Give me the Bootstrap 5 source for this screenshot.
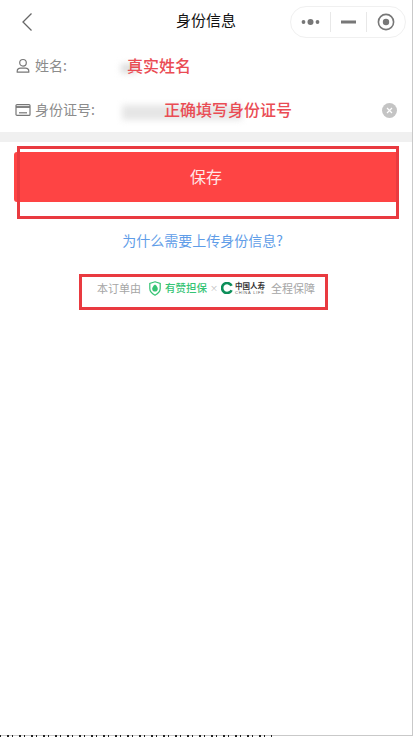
<!DOCTYPE html>
<html lang="zh">
<head>
<meta charset="utf-8">
<title>身份信息</title>
<link href="https://cdn.jsdelivr.net/npm/bootstrap@5.3.0/dist/css/bootstrap.min.css" rel="stylesheet">
<style>
html,body{width:416px;height:737px;margin:0;background:#fff;overflow:hidden}
body{font-family:"Noto Sans CJK SC","Liberation Sans",sans-serif;color:#555;position:relative}
.pg-frame{width:413px;height:736px;border-right:1px solid #c9c9c9;border-bottom:1px solid #c9c9c9;position:relative;background:#fff}
.top-bar{height:44px;position:relative}
.back-ico{width:12px;height:20px;margin-left:21px}
.top-title{position:absolute;left:0;top:9px;width:412px;text-align:center;font-size:15px;line-height:22px;color:#111}
.capsule{position:absolute;left:290px;top:6px;width:116px;height:32px;border:1px solid #f0f0f0;border-radius:16px}
.cap-part{height:20px}
.cap-a{width:39px}.cap-b{width:37px;border-left:1px solid #e8e8e8;border-right:1px solid #e8e8e8}.cap-c{width:38px}
.field-row{height:44px;padding-left:15px;padding-right:15px;font-size:14px;color:#8c8c8c}
.field-ico{width:16px;height:16px;margin-right:4px;flex:none}
.field-lbl{width:92px;flex:none;white-space:nowrap;position:relative;top:-1px}
.hint-red{color:#ea4c54;font-size:16px;font-weight:500;position:relative;top:-1px;white-space:nowrap}
.hint-id{margin-left:37px}
.smear{position:absolute;filter:blur(3px)}
.smear-a{left:121px;top:64px;width:16px;height:9px;background:#dcdcdc}
.smear-b{left:122px;top:105px;width:120px;height:15px;background:#e6e6e6}
.clear-dot{width:15px;height:15px;margin-left:auto;flex:none}
.gap-band{height:10px;background:#f0f0f0}
.save-btn{display:block;width:384px;height:50px;margin:10px 0 0 14px;background:#fe4444;color:#ffe8e8;border:0;border-radius:3px 0 0 3px;font-size:16px;line-height:48px;padding:0 0 2px}
.why-link{margin-top:26px;height:24px;line-height:24px;text-align:center;font-size:14px;color:#5f9de8;width:405px}
.assure-row{margin-top:24px;margin-left:97px;height:24px;font-size:11px;color:#a6a6a6;white-space:nowrap}
.green-txt{color:#35c474;font-weight:500;font-size:10.5px}
.assure-x{font-size:8px;margin:0 3px;color:#bbb}
.life-name{font-size:7.5px;line-height:8px;color:#333;font-weight:700}
.life-en{font-size:4px;line-height:5px;color:#555;font-family:"Liberation Sans",sans-serif;letter-spacing:.8px}
.life-wrap{width:31px;margin-left:2px}
.assure-end{margin-left:5px}
.mark-box{position:absolute;border:3px solid #e93a40;pointer-events:none}
.mark-a{left:17px;top:146px;width:382px;height:73px}
.mark-b{left:79px;top:274px;width:249px;height:36px}
.foot-dash{position:absolute;left:0;top:735px;width:272px;height:2px;background:repeating-linear-gradient(90deg,#222 0 1px,transparent 1px 7px,#222 7px 9px,transparent 9px 12px)}
</style>
</head>
<body>
<div class="pg-frame">
  <div class="top-bar d-flex align-items-center">
    <svg class="back-ico" viewBox="0 0 12 20"><path d="M10.5 1.500 2 10l8.500 8.500" fill="none" stroke="#666" stroke-width="1.300"/></svg>
    <div class="top-title">身份信息</div>
    <div class="capsule d-flex align-items-center">
      <div class="cap-part cap-a d-flex align-items-center justify-content-center">
        <svg width="20" height="8" viewBox="0 0 20 8"><circle cx="2.500" cy="4" r="1.900" fill="#777"/><circle cx="9.500" cy="4" r="3" fill="#777"/><circle cx="16.500" cy="4" r="1.900" fill="#777"/></svg>
      </div>
      <div class="cap-part cap-b d-flex align-items-center justify-content-center">
        <svg width="15" height="4" viewBox="0 0 15 4"><rect y="0.500" width="15" height="3" fill="#777"/></svg>
      </div>
      <div class="cap-part cap-c d-flex align-items-center justify-content-center">
        <svg width="18" height="18" viewBox="0 0 18 18"><circle cx="9" cy="9" r="7.600" fill="none" stroke="#777" stroke-width="1.600"/><circle cx="9" cy="9" r="3.200" fill="#777"/></svg>
      </div>
    </div>
  </div>

  <div class="smear smear-a"></div>
  <div class="smear smear-b"></div>

  <div class="field-row d-flex align-items-center">
    <svg class="field-ico" viewBox="0 0 16 16" fill="none" stroke="#777" stroke-width="1.200"><circle cx="8" cy="4.800" r="3.300"/><path d="M2.200 14.200v-1c0-2 1.800-3.100 3.400-3.100h4.800c1.600 0 3.400 1.100 3.400 3.100v1z" stroke-linejoin="round"/></svg>
    <div class="field-lbl">姓名:</div>
    <div class="hint-red">真实姓名</div>
  </div>
  <div class="field-row d-flex align-items-center">
    <svg class="field-ico" viewBox="0 0 16 16" fill="none" stroke="#777" stroke-width="1.200"><rect x="1" y="2.600" width="14" height="10.800" rx="1"/><path d="M1 5h14" stroke-width="1.800"/><path d="M4 10.800h8"/></svg>
    <div class="field-lbl">身份证号:</div>
    <div class="hint-red hint-id">正确填写身份证号</div>
    <svg class="clear-dot" viewBox="0 0 15 15"><circle cx="7.500" cy="7.500" r="7.500" fill="#c4c4c4"/><path d="M5 5l5 5M10 5l-5 5" stroke="#fff" stroke-width="1.200"/></svg>
  </div>

  <div class="gap-band"></div>

  <button type="button" class="btn save-btn">保存</button>

  <div class="why-link">为什么需要上传身份信息?</div>

  <div class="assure-row d-flex align-items-center">
    <span>本订单由</span>
    <svg class="ms-2" width="12" height="15" viewBox="0 0 12 15"><path d="M6 .8 11.200 2.400v5.200c0 3-2.400 5.200-5.200 6.600C3.200 12.800.8 10.600.8 7.600V2.400z" fill="none" stroke="#35c474" stroke-width="1.200"/><path d="M6 3.500c1.800 1.500 2.800 2.800 2.800 4.200A2.800 2.800 0 0 1 3.200 7.700C3.200 6.300 4.200 5 6 3.500z" fill="#35c474"/></svg>
    <span class="green-txt ms-1">有赞担保</span>
    <span class="assure-x">×</span>
    <svg width="12" height="12" viewBox="0 0 12 12"><path d="M10.600 3.800A5 5 0 1 0 10.600 8.200" fill="none" stroke="#0d8f5a" stroke-width="2.600"/></svg>
    <span class="life-wrap d-flex flex-column">
      <span class="life-name">中国人寿</span>
      <span class="life-en">CHINA LIFE</span>
    </span>
    <span class="assure-end">全程保障</span>
  </div>

  <div class="mark-box mark-a"></div>
  <div class="mark-box mark-b"></div>
</div>
<div class="foot-dash"></div>
</body>
</html>
